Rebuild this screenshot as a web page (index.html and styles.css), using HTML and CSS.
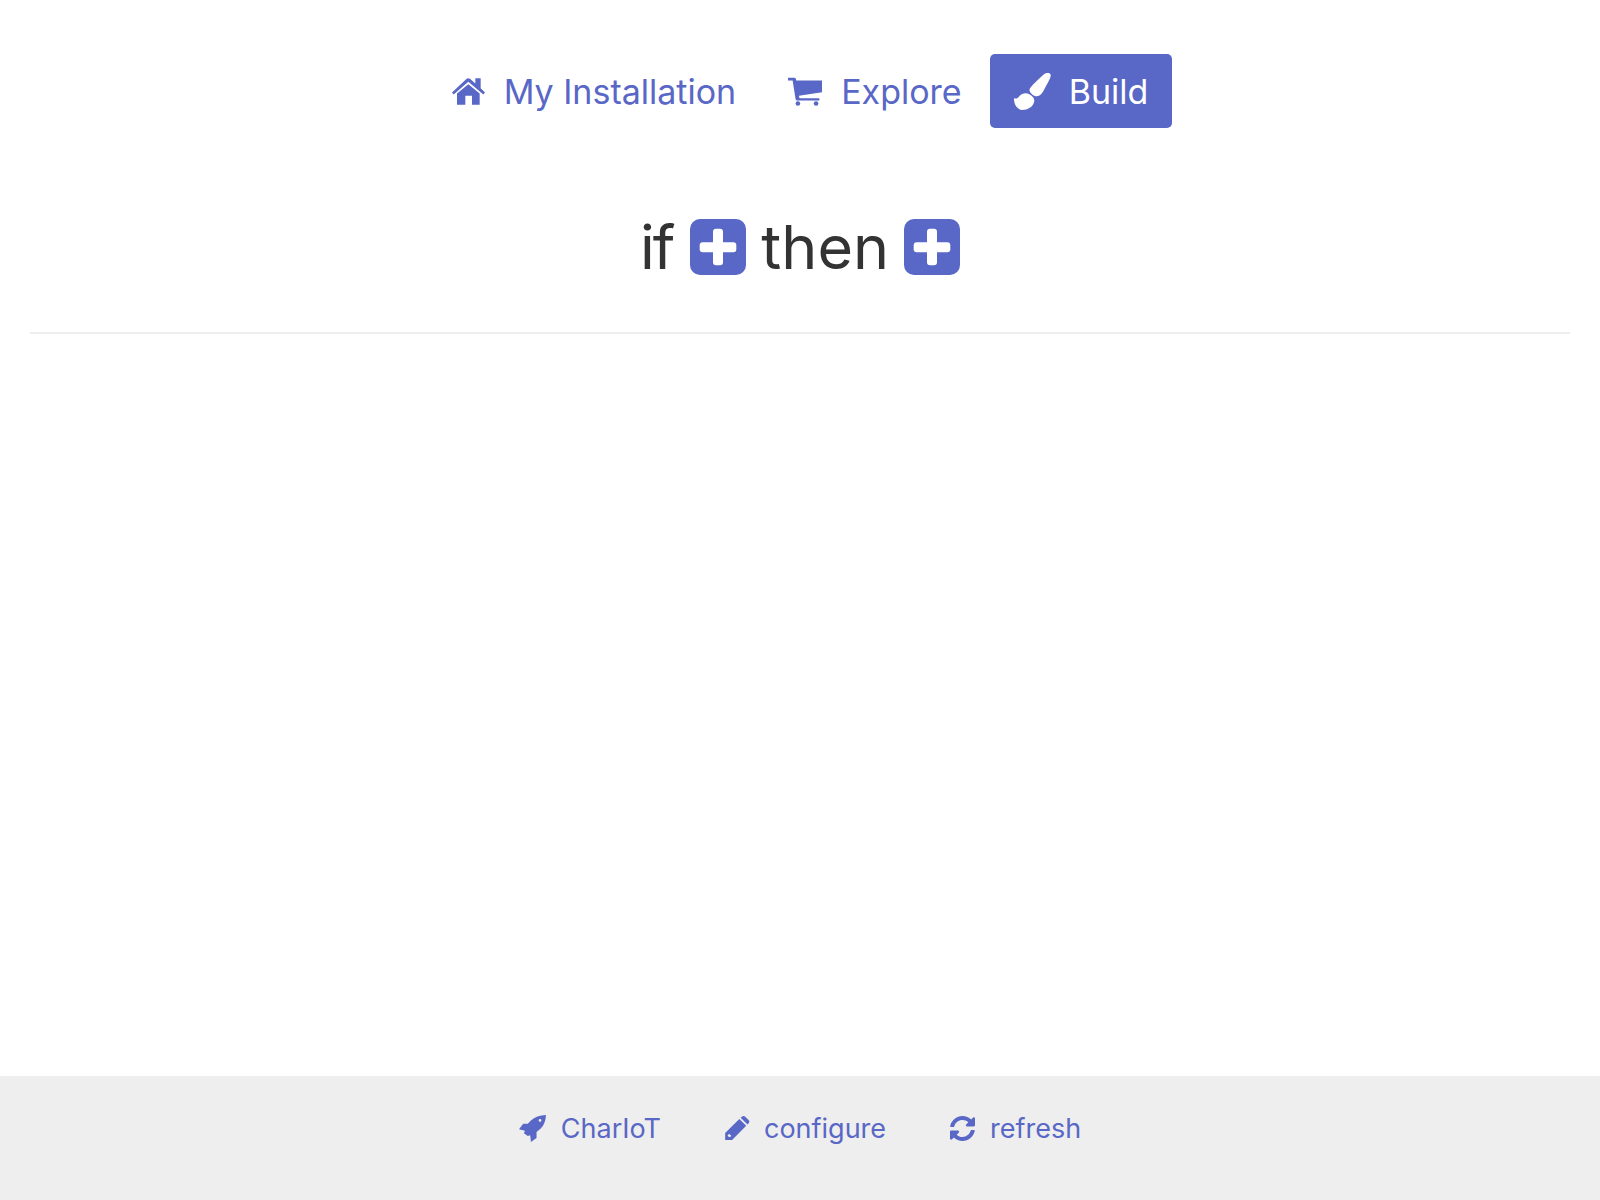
FILE: index.html
```html
<!DOCTYPE html>
<html lang="en">
<head>
  <meta charset="UTF-8">
  <title>CharIoT</title>
  <link rel="stylesheet" href="styles.css">
</head>
<body>
<nav class="tabs">
  <a class="tab" href="#">
    <svg class="icon icon-home" viewBox="18 22 99 80"><path d="M33 102V68L67 40l34 28v34H78V75H58v27zM18 65L62 24q5-4 10 0l16 14V22h16v30l13 13-5 6-45-38-44 38z"/></svg>
    My Installation
  </a>
  <a class="tab" href="#">
    <svg class="icon icon-cart" viewBox="17 22 103 87"><path d="M17 24h19q4 0 5 4l1 4h78v36l-70 10 2 8h60v7H45q-4 0-5-4l-9-57H17z"/><circle cx="47" cy="102" r="7"/><circle cx="102" cy="102" r="7"/></svg>
    Explore
  </a>
  <a class="tab active" href="#">
    <svg class="icon icon-brush" viewBox="38 38 110 110"><path d="M128 41c6-5 16-5 19 2 2 6-7 23-22 49-5 10-15 17-23 15-9-2-18-12-18-19 0-6 16-22 44-47z"/><path d="M38 113c7 3 12 0 17-7 7-8 19-10 30-4 9 5 15 13 13 21-3 17-20 25-36 25-14 0-25-18-24-35z"/></svg>
    Build
  </a>
</nav>

<main class="content">
  <h1 class="rule">
    <span class="rule-if">if</span>
    <a class="add" href="#"><svg viewBox="0 0 56 56"><rect width="56" height="56" rx="10" class="add-bg"/><rect x="9.7" y="23.2" width="36.6" height="10" rx="3" class="add-fg"/><rect x="23" y="9.7" width="10" height="36.6" rx="3" class="add-fg"/></svg></a>
    <span>then</span>
    <a class="add" href="#"><svg viewBox="0 0 56 56"><rect width="56" height="56" rx="10" class="add-bg"/><rect x="9.7" y="23.2" width="36.6" height="10" rx="3" class="add-fg"/><rect x="23" y="9.7" width="10" height="36.6" rx="3" class="add-fg"/></svg></a>
  </h1>
  <hr class="divider">
</main>

<footer class="footer">
  <a class="foot-link" href="#">
    <svg class="foot-icon icon-rocket" viewBox="28 30 77 80" preserveAspectRatio="none"><path fill-rule="evenodd" d="M105 30C88 31 72 36 62 46L53 56H40L28 72l17 5-3 7 11 8 7-2 2 20 16-12V80l12-10c10-10 14-24 15-40zM84 46a4 4 0 1 0 8 0a4 4 0 1 0-8 0z"/></svg>
    CharIoT
  </a>
  <a class="foot-link" href="#">
    <svg class="foot-icon icon-pencil" viewBox="25 32 75 73"><path fill-rule="evenodd" d="M25 105V84l43-43 21 21-43 43zM32 92l5-6 7 7-6 4z"/><path d="M72 37l6-4q4-2 8 1l11 11q3 4 0 8l-4 5z"/></svg>
    configure
  </a>
  <a class="foot-link" href="#">
    <svg class="foot-icon icon-sync" viewBox="8 8 496 496"><path d="M370.72 133.28C339.458 104.008 298.888 87.962 255.848 88c-77.458.068-144.328 53.178-162.791 126.85-1.344 5.363-6.122 9.15-11.651 9.15H24.103c-7.498 0-13.194-6.807-11.807-14.176C33.933 94.924 134.813 8 256 8c66.448 0 126.791 26.136 171.315 68.685L463.03 40.97C478.149 25.851 504 36.559 504 57.941V192c0 13.255-10.745 24-24 24H345.941c-21.382 0-32.09-25.851-16.971-40.971l41.75-41.749zM32 296h134.059c21.382 0 32.09 25.851 16.971 40.971l-41.75 41.75c31.262 29.273 71.835 45.319 114.876 45.28 77.418-.07 144.315-53.144 162.787-126.849 1.344-5.363 6.122-9.15 11.651-9.15h57.304c7.498 0 13.194 6.807 11.807 14.176C478.067 417.076 377.187 504 256 504c-66.448 0-126.791-26.136-171.315-68.685L48.97 471.03C33.851 486.149 8 475.441 8 454.059V320c0-13.255 10.745-24 24-24z"/></svg>
    refresh
  </a>
</footer>
</body>
</html>
```

FILE: styles.css
```css
html, body {
  height: 100%;
}

body {
  margin: 0;
  display: flex;
  flex-direction: column;
  min-height: 100vh;
  background: #fff;
  font-family: Inter, "Liberation Sans", sans-serif;
  color: #333;
}

a {
  text-decoration: none;
}

.tabs {
  display: flex;
  justify-content: center;
  gap: 4px;
  padding-top: 54px;
}

.tab {
  display: flex;
  align-items: center;
  height: 74px;
  padding: 0 24px;
  border-radius: 5px;
  color: #5967c6;
  font-size: 34px;
  gap: 19px;
}

.tab.active {
  background: #5967c6;
  color: #fff;
  gap: 18px;
}

.icon {
  display: block;
  fill: currentColor;
}

.icon-home {
  width: 33px;
  height: 27px;
}

.icon-cart {
  width: 34px;
  height: 29px;
}

.icon-brush {
  width: 37px;
  height: 37px;
}

.content {
  flex: 1;
  padding: 0 30px;
}

.rule {
  display: flex;
  justify-content: center;
  align-items: center;
  gap: 15px;
  height: 56px;
  margin: 91px 0 57px;
  font-size: 61px;
  font-weight: 400;
}

.rule-if {
  margin-right: 2px;
  letter-spacing: -2px;
}

.add {
  display: block;
  height: 56px;
}

.add svg {
  display: block;
  width: 56px;
  height: 56px;
}

.add-bg {
  fill: #5967c6;
}

.add-fg {
  fill: #fff;
}

.divider {
  height: 2px;
  margin: 0;
  border: 0;
  background: #eee;
}

.footer {
  display: flex;
  justify-content: center;
  gap: 64px;
  height: 124px;
  padding-top: 32px;
  box-sizing: border-box;
  background: #eee;
}

.foot-link {
  display: flex;
  align-items: center;
  gap: 14px;
  height: 40px;
  color: #5967c6;
  font-size: 27px;
}

.foot-icon {
  display: block;
  fill: currentColor;
}

.icon-rocket {
  width: 27px;
  height: 27px;
  margin-right: 1px;
}

.icon-pencil {
  width: 25px;
  height: 24px;
}

.icon-sync {
  width: 25px;
  height: 25px;
  margin-right: 1px;
}
```
